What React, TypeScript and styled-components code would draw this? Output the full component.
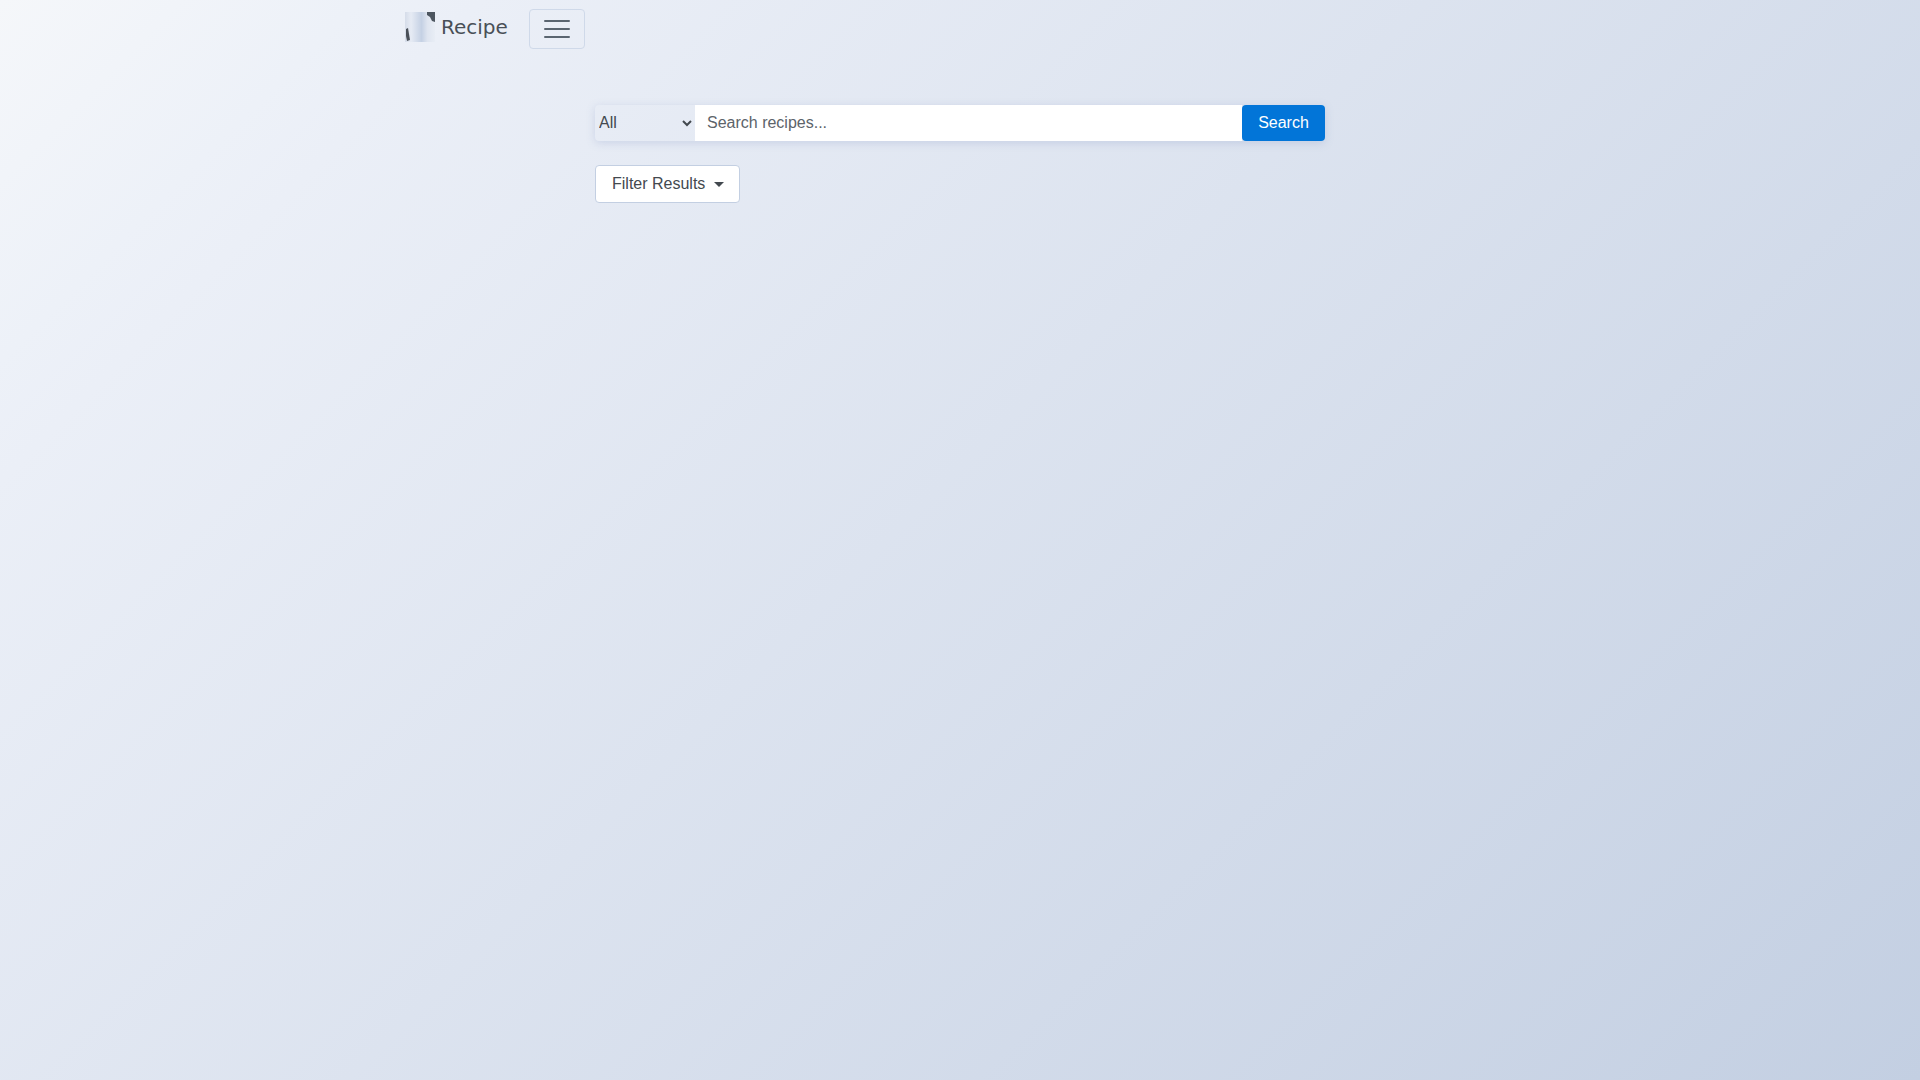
import React from 'react';
import styled, { createGlobalStyle } from 'styled-components';

const GlobalStyle = createGlobalStyle`
  html, body {
    margin: 0;
    min-height: 100vh;
  }
  body {
    font-family: 'Liberation Sans', Arial, sans-serif;
    font-size: 16px;
    color: #43494f;
    background: linear-gradient(135deg, #f5f7fa 0%, #edf1f8 12%, #ebeff7 16%, #c3cfe2 100%);
    background-attachment: fixed;
  }
  * {
    box-sizing: border-box;
  }
`;

const Navbar = styled.nav`
  width: 1140px;
  height: 58px;
  margin: 0 auto;
  padding: 0 15px;
  display: flex;
  align-items: center;
`;

const Brand = styled.a`
  display: flex;
  align-items: center;
  gap: 6px;
  margin-right: 21px;
  margin-top: -4px;
  font-family: 'DejaVu Sans', sans-serif;
  font-size: 20px;
  line-height: 30px;
  color: #495057;
`;

const Toggler = styled.button`
  width: 56px;
  height: 40px;
  padding: 0;
  display: flex;
  align-items: center;
  justify-content: center;
  background: transparent;
  border: 1px solid #cfd9e9;
  border-radius: 4px;
  color: #5a6570;
`;

const Main = styled.main`
  width: 730px;
  margin: 47px auto 0;
`;

const SearchForm = styled.form`
  display: flex;
  height: 36px;
  border-radius: 4px;
  box-shadow: 0 2px 8px rgba(120, 140, 190, 0.25);
`;

const CategorySelect = styled.select`
  width: 100px;
  height: 36px;
  padding: 0 0 2px;
  border: 0;
  border-radius: 4px 0 0 4px;
  background: transparent;
  font-family: inherit;
  font-size: 16px;
  color: #43494f;
  outline: none;
`;

const SearchInput = styled.input`
  flex: 1;
  min-width: 0;
  height: 36px;
  padding: 0 12px;
  border: 0;
  background: #fff;
  font-family: inherit;
  font-size: 16px;
  color: #43494f;
  outline: none;

  &::placeholder {
    color: #5c636a;
    opacity: 1;
  }
`;

const SearchButton = styled.button`
  width: 83px;
  height: 36px;
  padding: 0;
  border: 0;
  border-radius: 4px;
  background: #0275d8;
  font-family: inherit;
  font-size: 16px;
  color: #fff;
`;

const FilterButton = styled.button`
  display: inline-flex;
  align-items: center;
  width: 145px;
  height: 38px;
  margin-top: 24px;
  padding: 0 16px;
  background: #fff;
  border: 1px solid #c3cfe2;
  border-radius: 4px;
  font-family: inherit;
  font-size: 16px;
  color: #43494f;
  white-space: nowrap;
`;

const Caret = styled.span`
  flex: none;
  margin-left: 9px;
  border-top: 5px solid #43494f;
  border-left: 5px solid transparent;
  border-right: 5px solid transparent;
`;

function Logo() {
  return (
    <svg width="30" height="30" viewBox="0 0 30 30" aria-hidden>
      <defs>
        <linearGradient id="logoFade" x1="0" x2="1" y1="0" y2="0">
          <stop offset="0" stopColor="#d5dce9" />
          <stop offset="0.2" stopColor="#e6ebf4" />
          <stop offset="0.55" stopColor="#c5d1e4" />
          <stop offset="0.75" stopColor="#dfe5f0" />
          <stop offset="1" stopColor="#e8edf5" />
        </linearGradient>
      </defs>
      <rect width="30" height="30" fill="url(#logoFade)" />
      <path d="M22 0H30V10L27 9L25 5L22 3Z" fill="#4d5660" />
      <path d="M1 17L3 16L4 22L5 28L2 29L1 24Z" fill="#4a5058" />
    </svg>
  );
}

export default function App() {
  return (
    <>
      <GlobalStyle />
      <Navbar>
        <Brand>
          <Logo />
          Recipe
        </Brand>
        <Toggler aria-label="Toggle navigation">
          <svg width="30" height="30" viewBox="0 0 30 30" aria-hidden>
            <path d="M3 7h24M3 15h24M3 23h24" stroke="currentColor" strokeWidth="2" strokeLinecap="round" />
          </svg>
        </Toggler>
      </Navbar>
      <Main>
        <SearchForm>
          <CategorySelect defaultValue="All">
            <option>All</option>
          </CategorySelect>
          <SearchInput placeholder="Search recipes..." />
          <SearchButton type="button">Search</SearchButton>
        </SearchForm>
        <FilterButton type="button">
          Filter Results
          <Caret />
        </FilterButton>
      </Main>
    </>
  );
}
